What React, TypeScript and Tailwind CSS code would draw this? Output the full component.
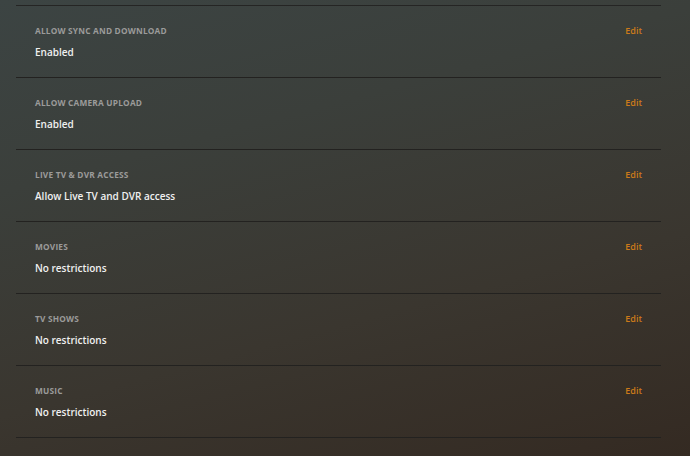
import React from "react";

const rows = [
  { label: "Allow Sync and Download", value: "Enabled" },
  { label: "Allow Camera Upload", value: "Enabled" },
  { label: "Live TV & DVR Access", value: "Allow Live TV and DVR access" },
  { label: "Movies", value: "No restrictions" },
  { label: "TV Shows", value: "No restrictions" },
  { label: "Music", value: "No restrictions" },
];

export default function App() {
  return (
    <div
      className="w-[690px] h-[456px] overflow-hidden bg-[linear-gradient(165deg,#3c4443_0%,#3b3f3b_30%,#3a362f_65%,#342a22_100%)]"
      style={{ fontFamily: '"Open Sans", "Noto Sans", sans-serif' }}
    >
      <div className="ml-[16px] w-[645px] pt-[5px]">
        <div className="border-t border-[#252524]">
          {rows.map((r) => (
            <div
              key={r.label}
              className="h-[72px] border-b border-[#232220] pl-[19px] pr-[19px] pt-[18px]"
            >
              <div className="flex items-center justify-between h-[14px]">
                <span className="text-[8.3px] leading-[14px] font-bold uppercase tracking-[0.2px] text-[#9b9b9a]">
                  {r.label}
                </span>
                <span className="text-[9px] leading-[14px] font-semibold text-[#cc7b19]">
                  Edit
                </span>
              </div>
              <div className="mt-[4px] text-[10px] leading-[20px] font-semibold text-[#f0f0f0]">
                {r.value}
              </div>
            </div>
          ))}
        </div>
      </div>
    </div>
  );
}
